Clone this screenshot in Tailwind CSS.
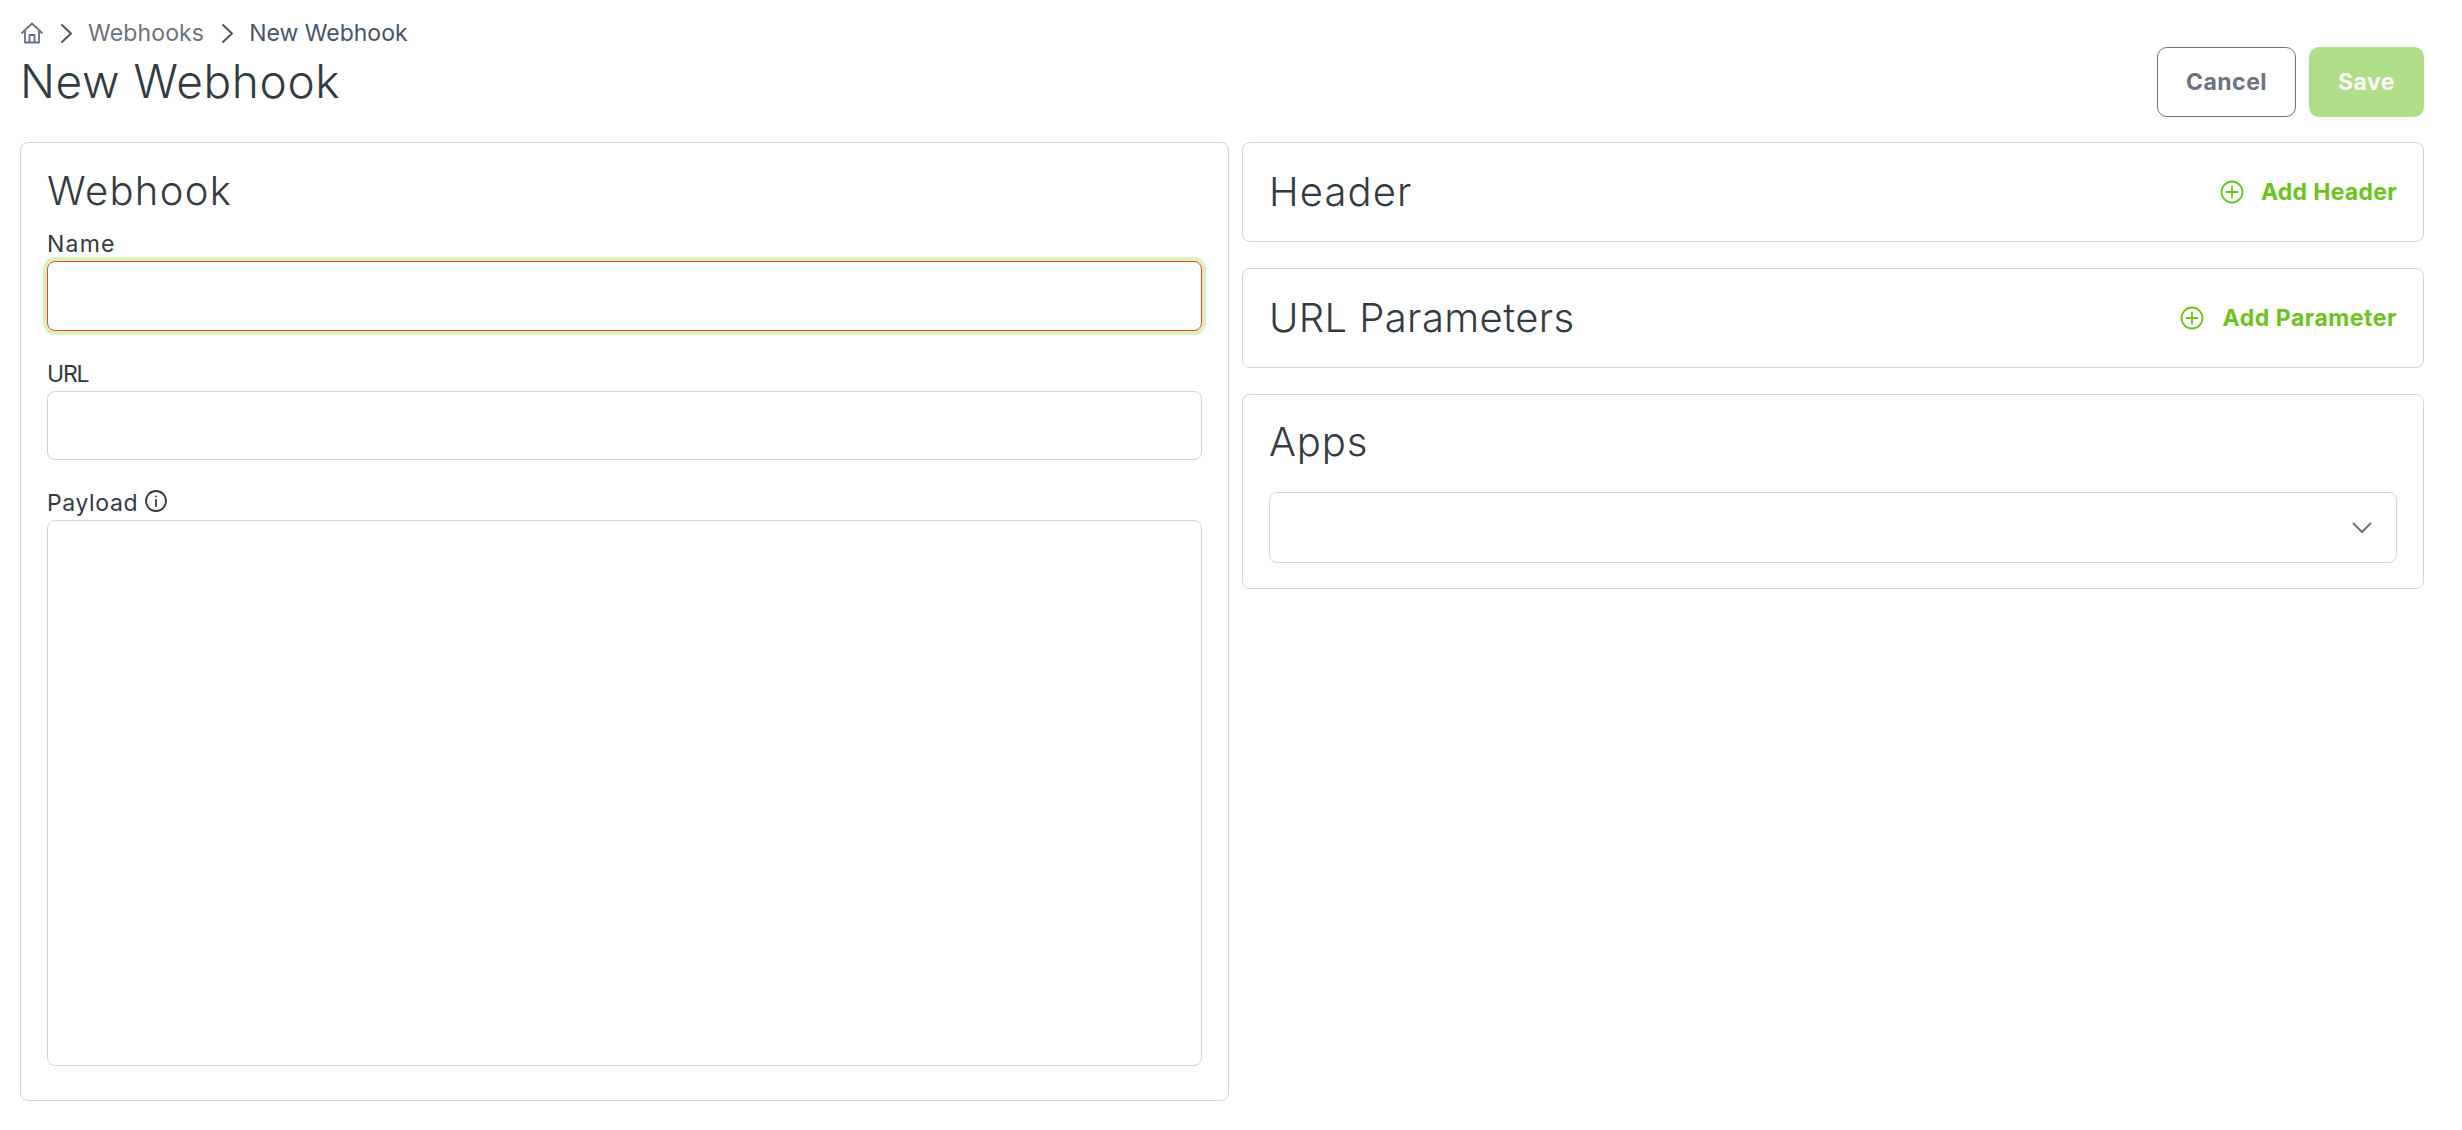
<!DOCTYPE html>
<html lang="en">
<head>
  <meta charset="UTF-8" />
  <title>New Webhook</title>
  <script src="https://cdn.jsdelivr.net/npm/@tailwindcss/browser@4"></script>
</head>
<body class="bg-white font-[Inter,sans-serif] text-[#333b42]">
  <div class="pl-[20px] pr-[38px] pt-[20px]">

    <!-- Page header -->
    <div class="flex justify-between h-[122px]">
      <div>
        <nav class="flex items-center h-[26px] text-[23px] leading-[26px] tracking-[0.15px] text-[#6b7280]">
          <svg class="w-[24px] h-[24px]" viewBox="0 0 24 24" fill="none" stroke="#667085" stroke-width="1.8" stroke-linejoin="round" stroke-linecap="round">
            <path d="M2 12 12 2.5 22 12M5 9.5V21.5H19V9.5M9.5 21.5V14H14.5V21.5" />
          </svg>
          <svg class="w-[13px] h-[21px] ml-[16px]" viewBox="0 0 13 21" fill="none" stroke="#4b5563" stroke-width="2" stroke-linecap="round" stroke-linejoin="round">
            <path d="M2 2 11 10.5 2 19" />
          </svg>
          <span class="ml-[15px]">Webhooks</span>
          <svg class="w-[13px] h-[21px] ml-[17px]" viewBox="0 0 13 21" fill="none" stroke="#4b5563" stroke-width="2" stroke-linecap="round" stroke-linejoin="round">
            <path d="M2 2 11 10.5 2 19" />
          </svg>
          <span class="ml-[15px] tracking-[0px] text-[#475569]">New Webhook</span>
        </nav>
        <h1 class="text-[46px] leading-[54px] tracking-[0.6px] font-[350] mt-[8px]">New Webhook</h1>
      </div>
      <div class="flex gap-[13px] pt-[27px]">
        <button class="w-[139px] h-[70px] rounded-[10px] border border-[#6b7280] text-[23px] tracking-[0.5px] font-bold text-[#6b7280]">Cancel</button>
        <button class="w-[115px] h-[70px] rounded-[10px] bg-[#b0dd88] text-[23px] tracking-[0.5px] font-bold text-white">Save</button>
      </div>
    </div>

    <div class="grid grid-cols-[1209px_1182px] gap-[13px] items-start">

      <!-- Webhook form -->
      <section class="h-[959px] rounded-[8px] border border-[#d0d5dd] px-[26px] pt-[23px]">
        <h2 class="text-[40px] leading-[50px] tracking-[1.3px] font-[350]">Webhook</h2>
        <label class="block text-[23px] leading-[26px] tracking-[1.2px] mt-[15px]">Name</label>
        <input class="block w-full h-[70px] mt-[4px] rounded-[8px] border border-[#e9413e] ring-4 ring-[#d9f2b8] outline-none" />
        <label class="block text-[23px] leading-[26px] tracking-[-1.2px] mt-[30px]">URL</label>
        <input class="block w-full h-[69px] mt-[4px] rounded-[8px] border border-[#d0d5dd] outline-none" />
        <label class="flex items-center gap-[6px] text-[23px] leading-[26px] tracking-[0.6px] mt-[30px]">
          Payload
          <svg class="w-[24px] h-[24px] mt-[-4px]" viewBox="0 0 24 24" fill="none" stroke="#333b42" stroke-width="1.8" stroke-linecap="round">
            <circle cx="12" cy="12" r="10" />
            <path d="M12 11V17M12 7.4V7.5" />
          </svg>
        </label>
        <textarea class="block w-full h-[546px] mt-[4px] rounded-[8px] border border-[#d0d5dd] outline-none resize-none"></textarea>
      </section>

      <div class="flex flex-col gap-[26px]">
        <!-- Header -->
        <section class="flex items-center justify-between h-[100px] rounded-[8px] border border-[#d0d5dd] px-[26px]">
          <h2 class="text-[40px] tracking-[1.1px] font-[350]">Header</h2>
          <button class="flex items-center gap-[17px] text-[23px] tracking-[0.3px] font-bold text-[#6cc21f]">
            <svg class="w-[24px] h-[24px]" viewBox="0 0 24 24" fill="none" stroke="currentColor" stroke-width="1.8" stroke-linecap="round">
              <circle cx="12" cy="12" r="10.5" />
              <path d="M12 6.5V17.5M6.5 12H17.5" />
            </svg>
            Add Header
          </button>
        </section>

        <!-- URL Parameters -->
        <section class="flex items-center justify-between h-[100px] rounded-[8px] border border-[#d0d5dd] px-[26px]">
          <h2 class="text-[40px] tracking-[0.4px] font-[350]">URL Parameters</h2>
          <button class="flex items-center gap-[18px] text-[23px] tracking-[0.55px] font-bold text-[#6cc21f]">
            <svg class="w-[24px] h-[24px]" viewBox="0 0 24 24" fill="none" stroke="currentColor" stroke-width="1.8" stroke-linecap="round">
              <circle cx="12" cy="12" r="10.5" />
              <path d="M12 6.5V17.5M6.5 12H17.5" />
            </svg>
            Add Parameter
          </button>
        </section>

        <!-- Apps -->
        <section class="h-[195px] rounded-[8px] border border-[#d0d5dd] px-[26px] pt-[22px]">
          <h2 class="text-[40px] leading-[50px] tracking-[0.9px] font-[350]">Apps</h2>
          <div class="flex items-center justify-end h-[71px] mt-[25px] rounded-[8px] border border-[#d0d5dd] pr-[24px]">
            <svg class="w-[20px] h-[12px]" viewBox="0 0 20 12" fill="none" stroke="#6b7280" stroke-width="2" stroke-linecap="round" stroke-linejoin="round">
              <path d="M1.5 1.5 10 10 18.5 1.5" />
            </svg>
          </div>
        </section>
      </div>
    </div>
  </div>
</body>
</html>
